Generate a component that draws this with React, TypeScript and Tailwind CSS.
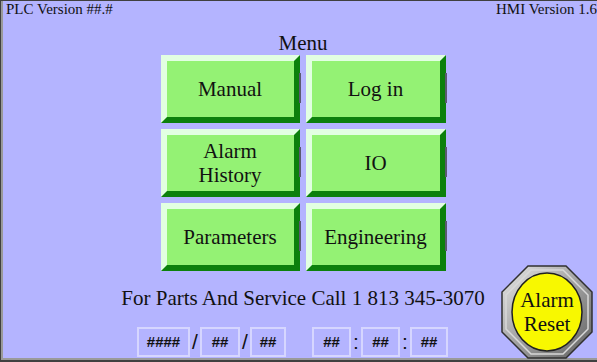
import React from 'react';

const SERIF = { fontFamily: '"Liberation Serif", "Times New Roman", serif' };
const SANS = { fontFamily: '"Liberation Sans", Arial, sans-serif' };

const BUTTONS: string[][] = [
  ['Manual'],
  ['Log in'],
  ['Alarm', 'History'],
  ['IO'],
  ['Parameters'],
  ['Engineering'],
];

function MenuButton({ lines }: { lines: string[] }) {
  return (
    <div className="relative h-[68px] border-[6px] border-t-[#e2ffe2] border-l-[#e2ffe2] border-b-[#0c800c] border-r-[#0c800c] bg-[#94f274] flex flex-col items-center justify-center text-[21px] leading-[24px] text-[#111]">
      {lines.map(l => (
        <span key={l}>{l}</span>
      ))}
      <span className="absolute right-[-7px] top-[12px] h-[30px] w-[2px] bg-[#5a5a70]" />
    </div>
  );
}

function Field({ text, w }: { text: string; w: string }) {
  return (
    <div
      className={`${w} h-[30px] border-2 border-[#d6d6ff] flex items-center justify-center text-[15px] font-bold text-[#111]`}
      style={SANS}
    >
      {text}
    </div>
  );
}

function Sep({ ch }: { ch: string }) {
  return (
    <span className="w-[10px] text-center text-[21px] text-[#111]" style={SANS}>
      {ch}
    </span>
  );
}

function AlarmReset() {
  return (
    <div className="absolute left-[498px] top-[264px] w-[92px] h-[94px]">
      <svg width="92" height="94" viewBox="0 0 92 94">
        <defs>
          <linearGradient id="ring" x1="0" y1="0" x2="1" y2="1">
            <stop offset="0" stopColor="#e8e8e8" />
            <stop offset="0.5" stopColor="#a0a0a0" />
            <stop offset="1" stopColor="#606060" />
          </linearGradient>
        </defs>
        <polygon
          points="27,1 65,1 91,27 91,67 65,93 27,93 1,67 1,27"
          fill="url(#ring)"
          stroke="#303030"
          strokeWidth="1.5"
        />
        <polygon
          points="30,5 62,5 87,30 87,64 62,89 30,89 5,64 5,30"
          fill="none"
          stroke="#d8d8d8"
          strokeWidth="1.5"
        />
        <ellipse cx="46" cy="47" rx="35" ry="39" fill="#f8f800" stroke="#202020" strokeWidth="1.5" />
      </svg>
      <div className="absolute inset-0 flex flex-col items-center justify-center text-[21px] leading-[24px] text-[#111]">
        <span>Alarm</span>
        <span>Reset</span>
      </div>
    </div>
  );
}

export default function App() {
  return (
    <div className="w-[597px] h-[362px] bg-[#404040] pl-px pt-px pb-[2px]" style={SERIF}>
      <div className="relative w-full h-full bg-[#b4b4ff] border-l-2 border-b-2 border-[#9a9a9a] flex flex-col">
        <div className="flex justify-between pl-[3px] pr-0 text-[15px] leading-[16px] text-[#111]">
          <span>PLC Version ##.#</span>
          <span>HMI Version 1.6</span>
        </div>
        <div className="flex flex-col items-center pl-[6px]">
          <div className="mt-[14px] text-[21px] leading-[24px] text-[#111]">Menu</div>
          <div className="mt-[0px] grid grid-cols-[139px_140px] gap-x-[6px] gap-y-[6px]">
            {BUTTONS.map(b => (
              <MenuButton key={b.join(' ')} lines={b} />
            ))}
          </div>
          <div className="mt-[14px] text-[21px] leading-[26px] text-[#111]">
            For Parts And Service Call 1 813 345-3070
          </div>
        </div>
        <div className="mt-[15px] flex items-center pl-[134px]">
          <Field text="####" w="w-[53px]" />
          <Sep ch="/" />
          <Field text="##" w="w-[40px]" />
          <Sep ch="/" />
          <Field text="##" w="w-[36px]" />
          <div className="w-[26px]" />
          <Field text="##" w="w-[39px]" />
          <Sep ch=":" />
          <Field text="##" w="w-[39px]" />
          <Sep ch=":" />
          <Field text="##" w="w-[38px]" />
        </div>
        <AlarmReset />
      </div>
    </div>
  );
}
